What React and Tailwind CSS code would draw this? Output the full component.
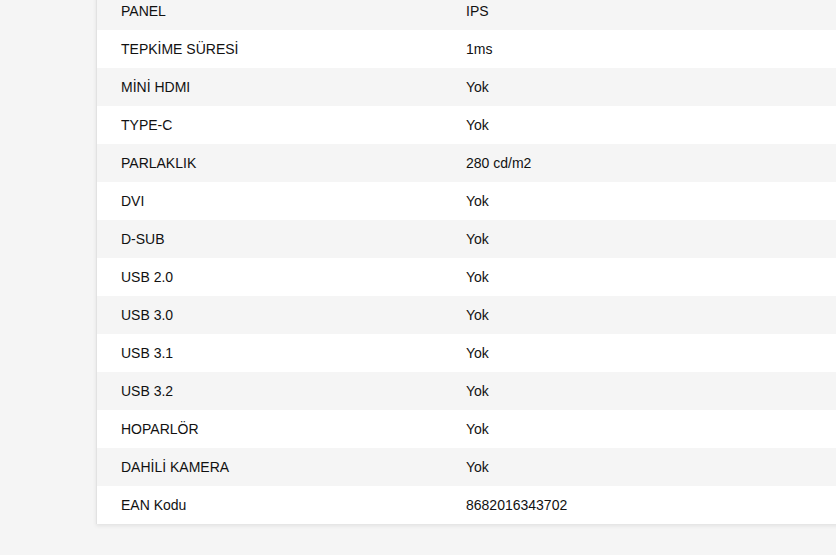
const specs = [
  ['PANEL', 'IPS'],
  ['TEPKİME SÜRESİ', '1ms'],
  ['MİNİ HDMI', 'Yok'],
  ['TYPE-C', 'Yok'],
  ['PARLAKLIK', '280 cd/m2'],
  ['DVI', 'Yok'],
  ['D-SUB', 'Yok'],
  ['USB 2.0', 'Yok'],
  ['USB 3.0', 'Yok'],
  ['USB 3.1', 'Yok'],
  ['USB 3.2', 'Yok'],
  ['HOPARLÖR', 'Yok'],
  ['DAHİLİ KAMERA', 'Yok'],
  ['EAN Kodu', '8682016343702'],
];

export default function App() {
  return (
    <div
      className="min-h-[555px] w-full overflow-hidden bg-[#f5f5f5] pl-[96px]"
      style={{ fontFamily: '"Liberation Sans", Arial, sans-serif' }}
    >
      {/* spec table, scrolled so the first row is cut at the top */}
      <div className="-mt-2 w-[780px] border-l border-[#e2e2e2] bg-white shadow-[0_2px_4px_rgba(0,0,0,0.08)]">
        {specs.map(([label, value], i) => (
          <div
            key={label}
            className={`flex h-[38px] items-center text-sm text-[#111] ${i % 2 === 0 ? 'bg-[#f5f5f5]' : 'bg-white'}`}
          >
            <div className="w-[369px] shrink-0 pl-6">{label}</div>
            <div>{value}</div>
          </div>
        ))}
      </div>
    </div>
  );
}
